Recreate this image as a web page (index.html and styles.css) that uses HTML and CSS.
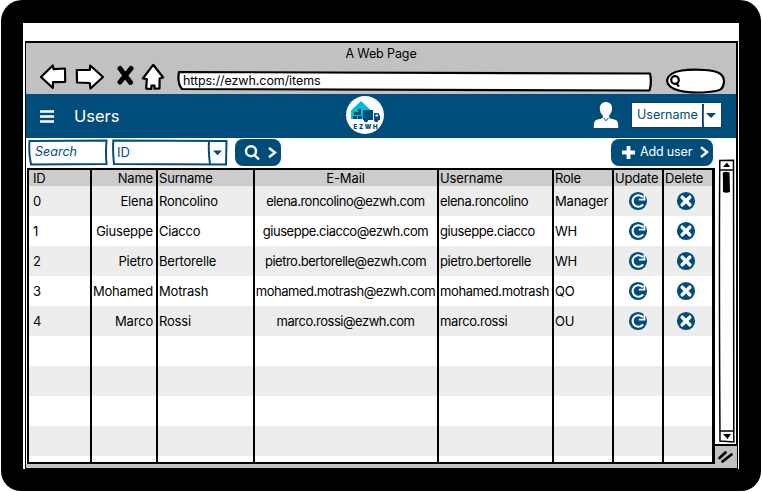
FILE: index.html
```html
<!DOCTYPE html>
<html lang="en">
<head>
<meta charset="utf-8">
<title>Users</title>
<link rel="stylesheet" href="styles.css">
</head>
<body>
<svg width="0" height="0" class="defs" aria-hidden="true">
  <symbol id="update" viewBox="0 0 20 20">
    <circle cx="10" cy="10" r="9.1" fill="#004d7c"/>
    <path d="M14.6 14A5.8 5.8 0 1 1 14.2 5.6" fill="none" stroke="#fff" stroke-width="2.1" stroke-linecap="round"/>
    <path d="M16.4 3.4V8.6H10.8" fill="none" stroke="#fff" stroke-width="1.9"/>
  </symbol>
  <symbol id="delete" viewBox="0 0 20 20">
    <circle cx="10" cy="10" r="9.1" fill="#004d7c"/>
    <path d="M6.2 6.2L13.8 13.8M13.8 6.2L6.2 13.8" stroke="#fff" stroke-width="3.5" stroke-linecap="round"/>
  </symbol>
</svg>
<div class="tablet">
<div class="screen">
<div class="window">
  <header class="chrome">
    <div class="title">A Web Page</div>
    <div class="nav">
      <svg class="back" width="28" height="27" viewBox="0 0 28 27"><path d="M2 14L13.8 2.5L14.6 6.2L26 5.5L26.2 18.8L14 19.2L13.8 25Z"/></svg>
      <svg class="forward" width="29" height="27" viewBox="0 0 29 27"><path d="M1.8 7L14.8 6.8L15.2 2.5L28 14L15.5 25.5L14.8 20L2 19.5Z"/></svg>
      <svg class="stop" width="17" height="21" viewBox="0 0 17 21"><path d="M3 3.5L13.5 17.5M14 3.5L3 17"/></svg>
      <svg class="home" width="24" height="28" viewBox="0 0 24 28"><path d="M12.2 1.8L22.2 14.5L18.6 15.5L18.5 25.5L13.5 25.7L13.5 22.5L10.5 22.5L10.3 26L5.2 25.6L5.8 16L1.8 15.5Z"/></svg>
      <div class="address">
        <svg width="476" height="22" viewBox="0 0 476 22"><path d="M2 2L473 3.5Q475 12 472.5 20.5L5 19Q0 13 2 2Z"/></svg>
        <span>https://ezwh.com/items</span>
      </div>
      <svg class="find" width="61" height="26" viewBox="0 0 61 26"><path d="M2 12C4 1 27 1 40 2C55 3 59 7 59 14C58 22 55 23 43 24C20 26 2 22 2 12Z"/><circle cx="10" cy="12" r="3.8"/><path d="M11 15L14 18.5"/></svg>
    </div>
  </header>
  <div class="bar">
    <svg class="menu" width="14" height="13" viewBox="0 0 14 13"><path d="M0 1.5H14M0 6.5H14M0 11.5H14" stroke="#fff" stroke-width="2.4"/></svg>
    <h1>Users</h1>
    <svg class="logo" width="38" height="38" viewBox="346 96 38 38">
      <circle cx="365" cy="115" r="19" fill="#fff"/>
      <path d="M351 119V110.5L361 101L370.5 110H363V119Z" fill="#00bcd4"/>
      <path d="M353 119V116H357V119ZM358 119V116H362V119ZM354 115V112H358V108.7H361V115Z" fill="#004d7c"/>
      <path d="M363 110H373V120H363ZM374 113H378.5L380 116V120H374Z" fill="#004d7c"/>
      <path d="M375.5 114.5H378V116.5H375.5Z" fill="#fff"/>
      <g fill="#004d7c"><circle cx="366" cy="120.3" r="2"/><circle cx="376.3" cy="120.3" r="2"/></g>
      <text x="353.5" y="129" textLength="24">EZWH</text>
    </svg>
    <svg class="person" width="26" height="27" viewBox="0 0 26 27"><path d="M13 1C17 1 19.5 4 19 8C18.8 12 17 13 16 15L16.5 17.2L23 19Q25.5 20 25.2 27H.8Q.5 20 3 19L9.5 17.2L10 15C8.2 13 7 11 6.8 8C6.6 4 9 1 13 1Z" fill="#fff"/><path d="M10.8 16.8L13 19.8L15.5 16.8" fill="none" stroke="#004d7c"/></svg>
    <div class="account"><span>Username</span>
      <svg width="18" height="24" viewBox="0 0 18 24"><path d="M1 0Q.5 12 1 24" fill="none" stroke="#0b3c70" stroke-width="2"/><path d="M4 9H14L9 14Z" fill="#004d7c"/></svg>
    </div>
  </div>
  <div class="tools">
    <div class="search"><svg width="80" height="27" viewBox="0 0 80 27"><path d="M1.5 2L78.5 1.5Q77.5 14 78.5 25L3 25.5Q.5 14 1.5 2Z"/></svg><span>Search</span></div>
    <div class="select"><svg width="116" height="27" viewBox="0 0 116 27"><path d="M1.3 1.5L114.5 2L114 25.5L2 25Q.6 13 1.3 1.5ZM97 2Q96.3 14 98 25"/><path class="arrow" d="M101 11.5H110L105.5 16.2Z"/></svg><span>ID</span></div>
    <div class="button go"><svg width="46" height="27" viewBox="0 0 46 27"><circle cx="16" cy="12.2" r="5"/><path d="M19.5 16L24 20.5M34 9L40 13.5L34 18.3"/></svg></div>
    <div class="button add"><svg width="13" height="13" viewBox="0 0 13 13"><path d="M6.5 0V13M0 6.5H13" stroke-width="3.8"/></svg><span>Add user</span><svg width="9" height="12" viewBox="0 0 9 12"><path d="M1 1.2L7.2 6L1 11"/></svg></div>
  </div>
  <main class="content">
    <div class="table">
      <div class="row head"><b>ID</b><b>Name</b><b>Surname</b><b>E-Mail</b><b>Username</b><b>Role</b><b>Update</b><b>Delete</b></div>
      <div class="row"><b>0</b><b>Elena</b><b>Roncolino</b><b>elena.roncolino@ezwh.com</b><b>elena.roncolino</b><b>Manager</b><b><svg><use href="#update"/></svg></b><b><svg><use href="#delete"/></svg></b></div>
      <div class="row"><b>1</b><b>Giuseppe</b><b>Ciacco</b><b>giuseppe.ciacco@ezwh.com</b><b>giuseppe.ciacco</b><b>WH</b><b><svg><use href="#update"/></svg></b><b><svg><use href="#delete"/></svg></b></div>
      <div class="row"><b>2</b><b>Pietro</b><b>Bertorelle</b><b>pietro.bertorelle@ezwh.com</b><b>pietro.bertorelle</b><b>WH</b><b><svg><use href="#update"/></svg></b><b><svg><use href="#delete"/></svg></b></div>
      <div class="row"><b>3</b><b>Mohamed</b><b>Motrash</b><b>mohamed.motrash@ezwh.com</b><b>mohamed.motrash</b><b>QO</b><b><svg><use href="#update"/></svg></b><b><svg><use href="#delete"/></svg></b></div>
      <div class="row"><b>4</b><b>Marco</b><b>Rossi</b><b>marco.rossi@ezwh.com</b><b>marco.rossi</b><b>OU</b><b><svg><use href="#update"/></svg></b><b><svg><use href="#delete"/></svg></b></div>
      <div class="row"><b></b><b></b><b></b><b></b><b></b><b></b><b></b><b></b></div>
      <div class="row"><b></b><b></b><b></b><b></b><b></b><b></b><b></b><b></b></div>
      <div class="row"><b></b><b></b><b></b><b></b><b></b><b></b><b></b><b></b></div>
      <div class="row"><b></b><b></b><b></b><b></b><b></b><b></b><b></b><b></b></div>
      <div class="row last"><b></b><b></b><b></b><b></b><b></b><b></b><b></b><b></b></div>
    </div>
    <div class="side">
      <svg class="scroll" width="17" height="285" viewBox="0 0 17 285">
        <path d="M1.8 1.5L15.5 1.2Q15 100 15.8 283L2 282Q1 100 1.8 1.5ZM1.5 11H16M1.5 272H16" fill="#fff" stroke="#000" stroke-width="1.5"/>
        <path d="M5 8L9 3.5L12 8ZM5 275H13L9.5 280Z"/>
        <path d="M4.8 13.5Q8 12 11.5 13.5L12 33Q8 34.5 5 33Z"/>
      </svg>
      <svg class="grip" width="22" height="24" viewBox="0 0 22 24"><path d="M0 1H22" stroke="#000" stroke-width="2"/><path d="M4.5 14L10.5 8.5M7.5 17.5L16.5 10.5" stroke="#000" stroke-width="2.7" stroke-linecap="round"/></svg>
    </div>
  </main>
  <div class="status"></div>
</div>
</div>
</div>
</body>
</html>
```
FILE: styles.css
```css
* { box-sizing: border-box; }
body { margin: 0; background: #fff; font: 13px/16px Inter, "Liberation Sans", sans-serif; color: #000; overflow: hidden; }
svg { display: block; flex: none; }
.defs { display: none; }
.tablet { width: 760px; height: 491px; margin: 0 0 0 1px; padding: 23px 22px 22px 22px; background: #000; border-radius: 21px 21px 20px 20px; }
.screen { height: 446px; background: #fff; padding: 18px 1px 0 2px; }
.window { width: 713px; border: solid #000; border-width: 2px 2px 1px 1px; background: #fff; }
.chrome { height: 51px; background: #c1c1c1; }
.title { height: 20px; padding-top: 3px; text-align: center; font-size: 12.5px; letter-spacing: -.1px; }
.nav { display: flex; }
.nav svg { fill: #fff; stroke: #000; stroke-width: 2.2; stroke-linejoin: round; }
.nav .back { margin-left: 13px; }
.nav .forward { margin-left: 8px; }
.nav .stop { margin: 2px 0 0 13px; stroke-width: 5; stroke-linecap: round; }
.nav .home { margin-left: 7px; }
.nav .address { position: relative; width: 476px; height: 22px; margin: 7px 0 0 12px; }
.nav .address svg { position: absolute; inset: 0; }
.address span { position: relative; display: block; padding: 3px 0 0 6px; font-size: 12.5px; letter-spacing: -.08px; }
.nav .find { margin: 5px 0 0 12px; }
.bar { display: flex; height: 44px; background: #004d7c; }
.menu { margin: 16px 0 0 14px; }
h1 { width: 60px; margin: 12px 0 0 20px; color: #fff; font-size: 16.5px; line-height: 20px; font-weight: 400; }
.logo { margin: 2px 0 0 212px; }
.logo text { font: 900 6px Inter, sans-serif; fill: #004d7c; }
.person { margin: 7px 0 0 209px; }
.account { display: flex; width: 91px; height: 26px; margin: 8px 0 0 12px; padding: 1px; border: 1px solid #0b3c70; background: #fff; color: #004d7c; }
.account span { width: 71px; padding: 3px 0 0 4px; font-size: 12.5px; letter-spacing: 0; }
.tools { display: flex; height: 30px; padding: 1px 0 0 2px; color: #004d7c; }
.search, .select { position: relative; height: 27px; }
.search { width: 80px; font-style: italic; font-size: 12.5px; }
.select { width: 116px; margin-left: 4px; }
.search svg, .select svg { position: absolute; inset: 0; fill: none; stroke: #004d7c; stroke-width: 2; }
.select .arrow { fill: #004d7c; stroke: none; }
.search span, .select span { display: block; padding: 5px 0 0 7px; }
.select span { padding-left: 5px; }
.button { height: 27px; background: #004d7c; border-radius: 8px; color: #fff; }
.button svg { fill: none; stroke: #fff; stroke-width: 2.4; }
.go { width: 46px; margin-left: 7px; }
.add { display: flex; align-items: center; width: 102px; margin-left: 330px; padding: 0 4px 1px 11px; }
.add span { width: 60px; margin-left: 5px; font-size: 12.5px; white-space: nowrap; letter-spacing: -.15px; }
.content { display: flex; height: 296px; }
.table { width: 688px; height: 296px; margin-left: 1px; border: 2px solid #000; border-right-width: 3px; }
.row { display: grid; grid-template-columns: 63px 66px 97px 184px 115px 60px 50px 48px; height: 30px; }
.row:nth-child(even) { background: #ededed; }
.row.head { height: 16px; background: #ccc; }
.row.last { height: 6px; background: #fff; }
.row b { display: flex; align-items: center; height: 100%; padding: 0 2px 1px 1px; border-right: 2px solid #000; font-weight: 400; white-space: nowrap; min-width: 0; letter-spacing: -.2px; }
.row b:first-child { padding-left: 4px; }
.row b:nth-child(2) { justify-content: flex-end; padding-right: 3px; }
.row b:nth-child(4) { justify-content: center; padding-left: 0; padding-right: 1px; letter-spacing: -.48px; }
.row b:nth-child(5) { letter-spacing: -.4px; }
.head b:nth-child(4), .head b:nth-child(5) { letter-spacing: -.1px; }
.row b:nth-child(8) { border: 0; }
.row b svg { width: 20px; height: 20px; margin: 0 auto; }
.row b:nth-child(8) svg { margin-left: 11px; }
.side { position: relative; flex: 1; }
.scroll { position: absolute; left: 3px; top: -9px; }
.grip { position: absolute; left: 0; top: 276px; background: #c1c1c1; }
.status { height: 4px; background: #c1c1c1; }
```
